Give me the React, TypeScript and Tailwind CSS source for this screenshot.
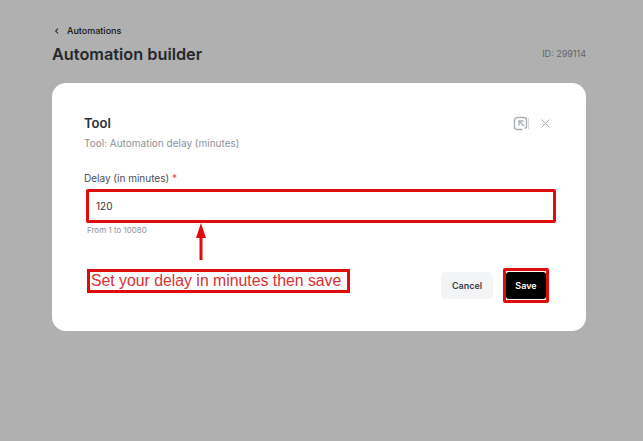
export default function App() {
  return (
    <div className="relative h-[441px] w-[643px] overflow-hidden bg-[#b0b0b0] pl-[52px] pr-[57px] pt-[24px] font-['Inter',sans-serif]">
      <div className="flex h-[13px] items-center pl-[2px] text-[9px] font-medium leading-[13px] text-[#111]">
        <svg width="6" height="8" viewBox="0 0 6 8" fill="none" stroke="#222" strokeWidth="1.1" className="mr-[7px]">
          <path d="M4 1.5 1.7 4 4 6.5" />
        </svg>
        Automations
      </div>
      <div className="mt-[5px] flex h-[24px] items-center justify-between">
        <h1 className="text-[16.3px] font-semibold leading-[24px] text-[#24282c]">Automation builder</h1>
        <span className="text-[9px] text-[#5f6368]">ID: 299114</span>
      </div>
      <div className="mt-[17px] h-[248px] w-[534px] rounded-[14px] bg-white px-[32px] pt-[32px]">
        <div className="flex h-[16px] items-center justify-between">
          <h2 className="text-[13px] font-semibold leading-[16px] text-[#2a2e33]">Tool</h2>
          <div className="mr-[3px] flex items-center text-[#a9adb3]">
            <svg width="15" height="15" viewBox="0 0 15 15" fill="none" stroke="currentColor" strokeWidth="1.4">
              <path d="M4.500 1.500H11A2.500 2.500 0 0 1 13.500 4V10A2.500 2.500 0 0 1 11.500 12.500" />
              <path d="M9.500 13.500H4A2.500 2.500 0 0 1 1.500 11V4.500A3 3 0 0 1 4.500 1.500" />
              <path d="M11 10 6.500 5.500M6 9.500V5h4.500" />
            </svg>
            <span className="mr-[11px] h-[11px] w-px bg-[#d8dade]" />
            <svg width="11" height="11" viewBox="0 0 11 11" fill="none" stroke="currentColor" strokeWidth="1">
              <path d="M1.500 1.500 9.500 9.500M9.500 1.500 1.500 9.500" />
            </svg>
          </div>
        </div>
        <p className="mt-[5px] text-[10px] leading-[14px] text-[#8d9299]">Tool: Automation delay (minutes)</p>
        <label className="mt-[21px] block text-[10px] leading-[14px] text-[#4a4f55]">
          Delay (in minutes) <span className="text-[#e5484d]">*</span>
        </label>
        <div className="relative ml-[2px] mt-[4px] flex h-[34px] w-[470px] items-center rounded-[2px] border-[3px] border-[#e00b0b] bg-white pl-[7px] text-[10px] text-[#33373b]">
          120
        </div>
        <p className="mt-[2px] pl-[3px] text-[8px] leading-[11px] text-[#8d9299]">From 1 to 10080</p>
        <div className="mt-[32px] flex items-center justify-between">
          <div className="mt-[-9px] ml-[3px] flex h-[24px] w-[263px] items-center border-[3px] border-[#e00b0b] bg-white pl-[1px] font-['Liberation_Sans',sans-serif] text-[15.8px] leading-none text-[#d83030]">
            Set your delay in minutes then save
          </div>
          <div className="flex items-center">
            <button className="h-[27px] w-[52px] rounded-[5px] bg-[#f3f4f6] text-[9px] font-semibold text-[#3b4046]">Cancel</button>
            <div className="ml-[10px] mr-[5px] flex h-[35px] w-[46px] items-center justify-center rounded-[2px] border-[3px] border-[#e00b0b]">
              <button className="h-[27px] w-[41px] rounded-[3px] bg-black text-[9px] font-semibold text-white">Save</button>
            </div>
          </div>
        </div>
      </div>
      <svg className="absolute left-[195px] top-[222px]" width="12" height="40" viewBox="0 0 12 40" fill="#e00b0b">
        <path d="M6 1 11 16H7.500V38H4.500V16H1Z" />
      </svg>
    </div>
  );
}
